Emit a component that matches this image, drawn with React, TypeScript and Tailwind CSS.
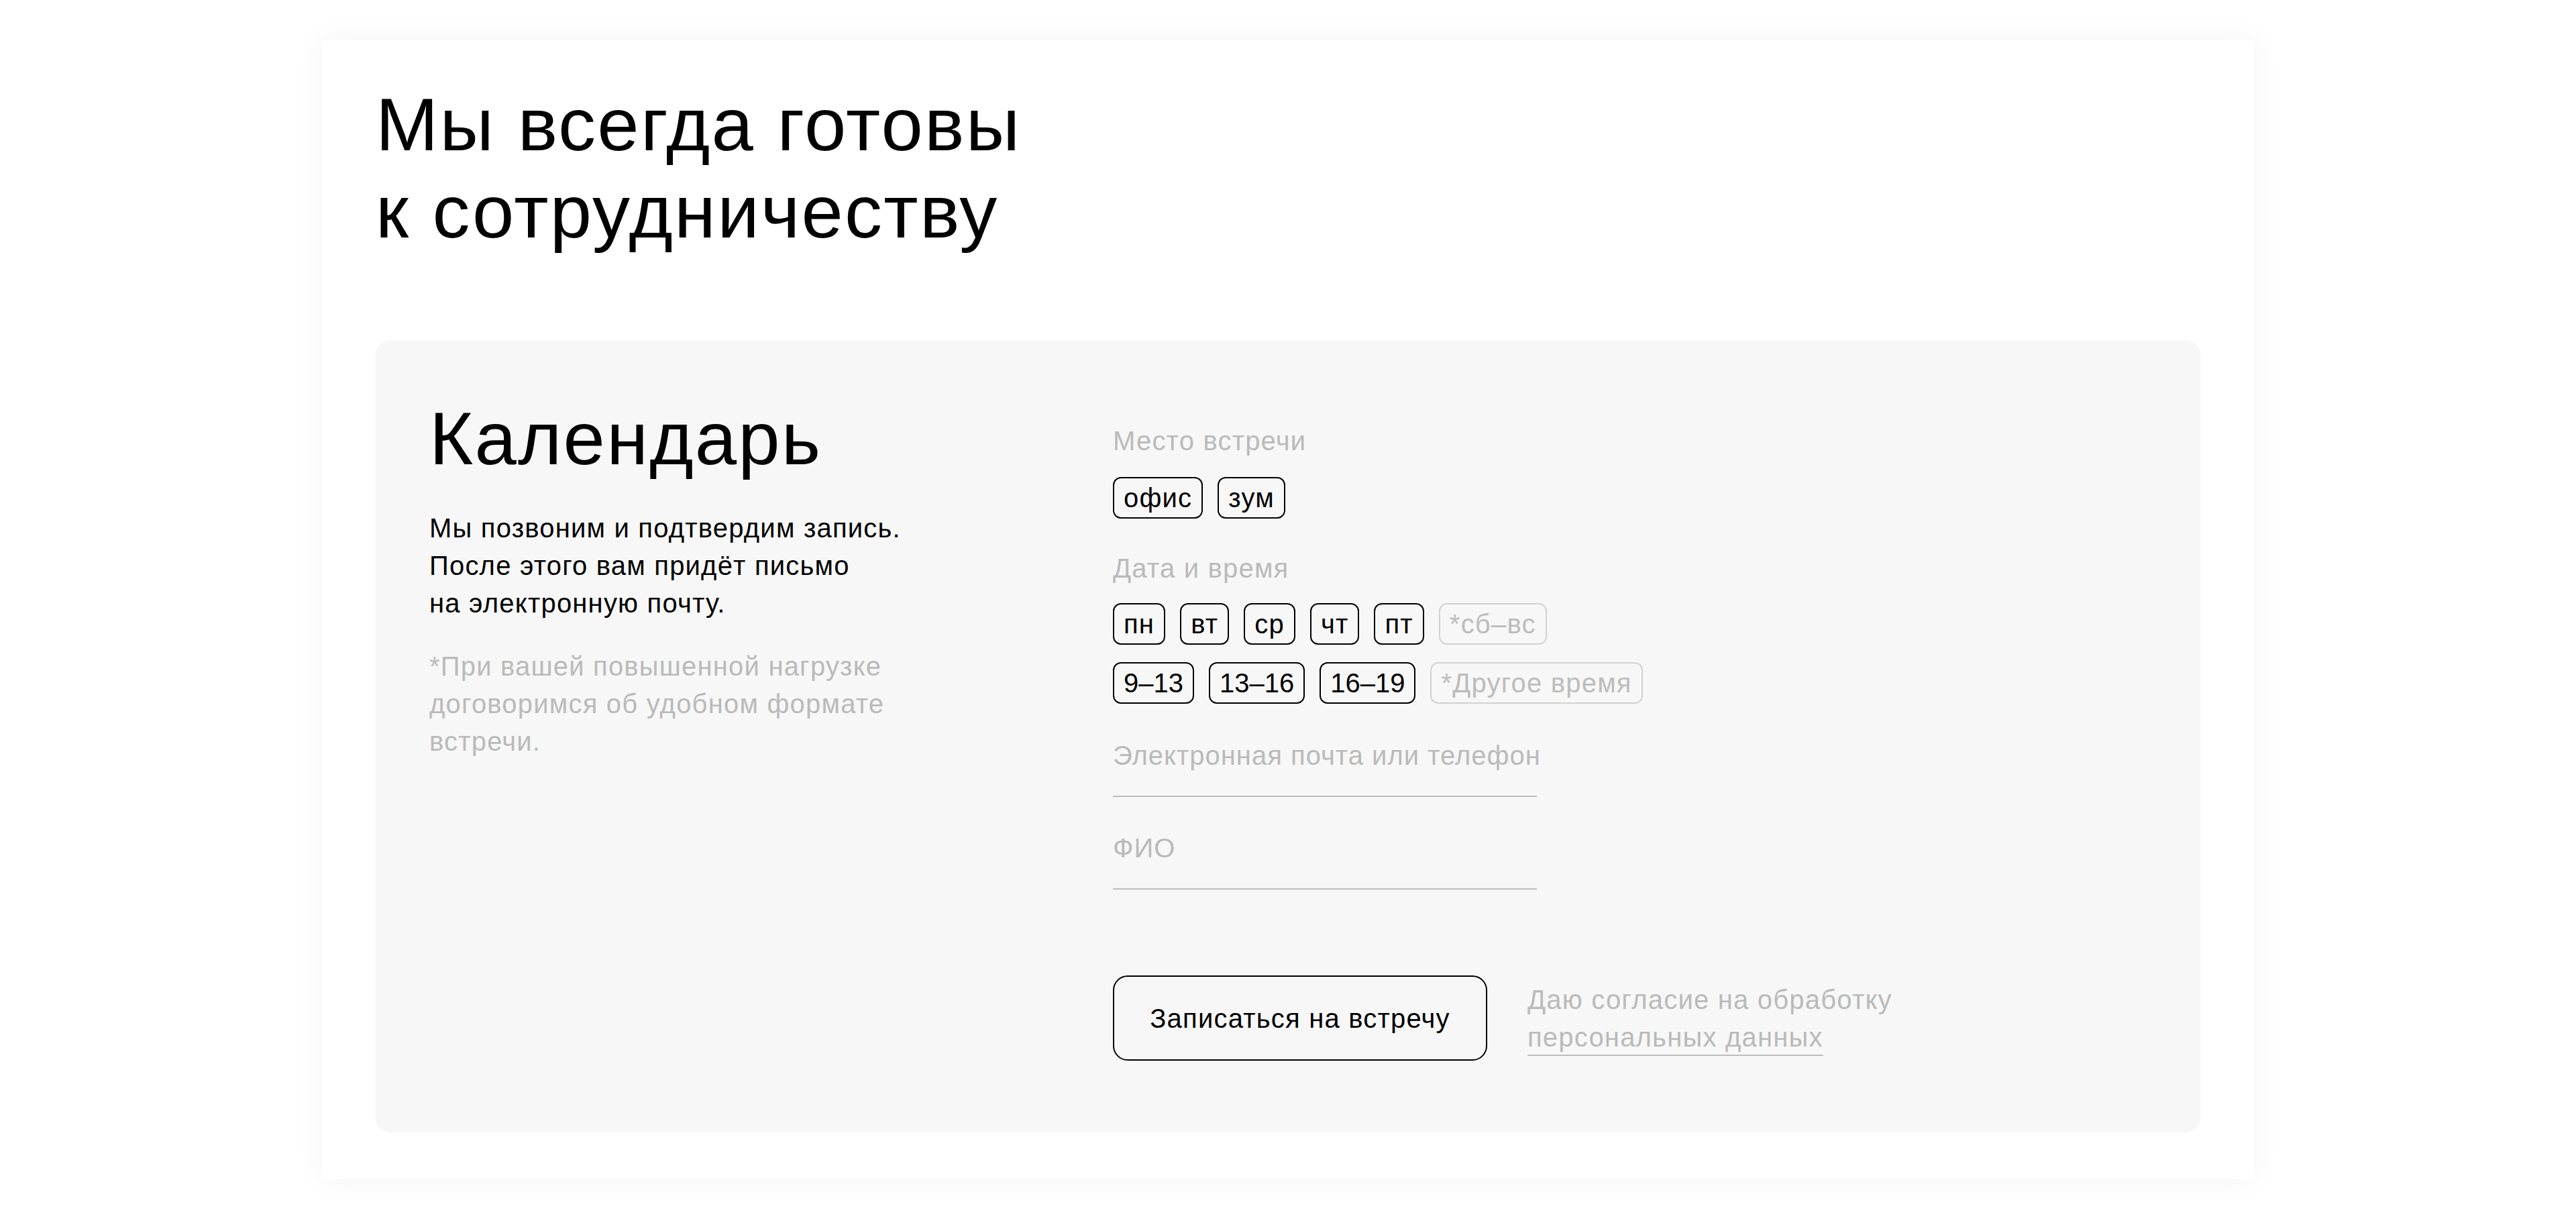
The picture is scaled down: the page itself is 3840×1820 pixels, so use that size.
import React from "react";

const font = { fontFamily: '"Liberation Sans", Arial, sans-serif' };

function Chip({
  children,
  muted = false,
  tight = false,
}: {
  children: React.ReactNode;
  muted?: boolean;
  tight?: boolean;
}) {
  const base =
    "flex h-[62px] items-center whitespace-nowrap rounded-[12px] border-2 px-[14px] text-[40px] leading-[56px]";
  const track = tight ? " tracking-[0em]" : " tracking-[0.03em]";
  const color = muted ? " border-[#d2d2d2] text-[#bcbcbc]" : " border-black text-black";
  return <div className={base + track + color}>{children}</div>;
}

function Field({ label }: { label: string }) {
  return (
    <div className="w-[632px] whitespace-nowrap border-b-2 border-[#bdbdbd] pb-[32px] text-[40px] leading-[56px] tracking-[0.025em] text-[#bababa]">
      {label}
    </div>
  );
}

export default function App() {
  return (
    <div className="min-h-[1820px] w-full bg-white" style={font}>
      <div className="mx-auto mt-[59px] w-[2880px] bg-white px-[80px] pb-[70px] pt-[62px] shadow-[0_0_40px_rgba(0,0,0,0.05)]">
        <h1 className="text-[112px] font-normal leading-[130px] tracking-[0.02em] text-black">
          Мы всегда готовы
          <br />к сотрудничеству
        </h1>

        <div className="mt-[127px] flex rounded-[20px] bg-[#f7f7f7] px-[80px] pb-[107px] pt-[81px]">
          <div className="w-[1019px] shrink-0">
            <h2 className="text-[112px] font-normal leading-[130px] tracking-[0.02em] text-black">Календарь</h2>
            <p className="mt-[40px] text-[40px] leading-[56px] tracking-[0.03em] text-black">
              Мы позвоним и подтвердим запись.
              <br />
              После этого вам придёт письмо
              <br />
              на электронную почту.
            </p>
            <p className="mt-[38px] text-[40px] leading-[56px] tracking-[0.03em] text-[#bababa]">
              *При вашей повышенной нагрузке
              <br />
              договоримся об удобном формате
              <br />
              встречи.
            </p>
          </div>

          <div className="flex flex-col pt-[40px]">
            <div className="text-[40px] leading-[56px] tracking-[0.03em] text-[#bababa]">Место встречи</div>
            <div className="mt-[26px] flex gap-[22px]">
              <Chip>офис</Chip>
              <Chip>зум</Chip>
            </div>

            <div className="mt-[46px] text-[40px] leading-[56px] tracking-[0.03em] text-[#bababa]">Дата и время</div>
            <div className="mt-[24px] flex gap-[22px]">
              <Chip>пн</Chip>
              <Chip>вт</Chip>
              <Chip>ср</Chip>
              <Chip>чт</Chip>
              <Chip>пт</Chip>
              <Chip muted>*сб–вс</Chip>
            </div>
            <div className="mt-[26px] flex gap-[22px]">
              <Chip tight>9–13</Chip>
              <Chip tight>13–16</Chip>
              <Chip tight>16–19</Chip>
              <Chip muted>*Другое время</Chip>
            </div>

            <div className="mt-[49px]">
              <Field label="Электронная почта или телефон" />
            </div>
            <div className="mt-[48px]">
              <Field label="ФИО" />
            </div>

            <div className="mt-[128px] flex items-center gap-[60px]">
              <button className="flex h-[127px] w-[558px] items-center justify-center rounded-[22px] border-2 border-black text-[40px] leading-[56px] tracking-[0.03em] text-black">
                Записаться на встречу
              </button>
              <div className="whitespace-nowrap text-[40px] leading-[56px] tracking-[0.03em] text-[#bababa]">
                Даю согласие на обработку
                <br />
                <span className="underline decoration-[#bdbdbd] decoration-2 underline-offset-[12px]">
                  персональных данных
                </span>
              </div>
            </div>
          </div>
        </div>
      </div>
    </div>
  );
}
